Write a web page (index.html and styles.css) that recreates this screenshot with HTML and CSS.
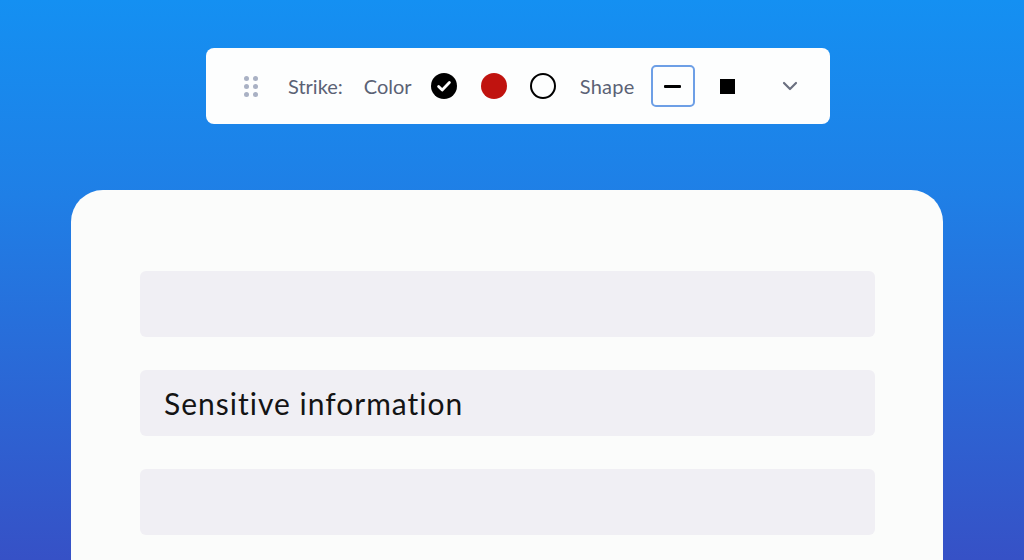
FILE: index.html
```html
<!DOCTYPE html>
<html lang="en">
<head>
<meta charset="utf-8">
<title>Strike toolbar</title>
<link rel="stylesheet" href="styles.css">
</head>
<body>
<div class="toolbar">
  <div class="grip">
    <span></span><span></span><span></span><span></span><span></span><span></span>
  </div>
  <span class="label strike">Strike:</span>
  <span class="label color">Color</span>
  <span class="swatch black">
    <svg width="26" height="26" viewBox="0 0 26 26"><circle cx="13" cy="13" r="13" fill="#000"/><path d="M7.6 13.4l3.6 3.5 7.2-7.4" fill="none" stroke="#fff" stroke-width="2.8" stroke-linecap="round" stroke-linejoin="round"/></svg>
  </span>
  <span class="swatch red"></span>
  <span class="swatch empty"></span>
  <span class="label shape">Shape</span>
  <span class="shape-btn selected"><span class="dash"></span></span>
  <span class="shape-square"></span>
  <span class="chevron">
    <svg width="16" height="10" viewBox="0 0 16 10"><path d="M2 2l6 6 6-6" fill="none" stroke="#6b7080" stroke-width="2.2" stroke-linecap="round" stroke-linejoin="round"/></svg>
  </span>
</div>
<div class="card">
  <div class="field"></div>
  <div class="field"><span class="field-text">Sensitive information</span></div>
  <div class="field"></div>
</div>
</body>
</html>
```

FILE: styles.css
```css
html, body {
  margin: 0;
  padding: 0;
}
body {
  width: 1024px;
  height: 560px;
  overflow: hidden;
  background: linear-gradient(180deg, #1490f2 0%, #1f7fe6 35%, #3651c6 100%);
  font-family: Lato, "Open Sans", "Liberation Sans", sans-serif;
  padding-top: 48px;
  box-sizing: border-box;
}
.toolbar {
  margin-left: 206px;
  width: 624px;
  height: 76px;
  box-sizing: border-box;
  background: #fdfefe;
  border-radius: 8px;
  display: flex;
  align-items: center;
  padding-left: 38px;
}
.grip {
  display: grid;
  grid-template-columns: 5px 5px;
  grid-template-rows: 5px 5px 5px;
  column-gap: 4px;
  row-gap: 3px;
  margin-right: 30px;
}
.grip span {
  width: 5px;
  height: 5px;
  border-radius: 50%;
  background: #a9b1c4;
}
.label {
  font-size: 20px;
  color: #5b6275;
  line-height: 1;
}
.strike { margin-right: 21px; }
.color { margin-right: 19px; }
.swatch {
  width: 26px;
  height: 26px;
  border-radius: 50%;
  box-sizing: border-box;
  flex: none;
  display: block;
}
.swatch svg { display: block; }
.black { margin-right: 24px; }
.red { background: #c0130f; margin-right: 23px; }
.empty { border: 2.5px solid #000; margin-right: 24px; }
.shape { margin-right: 16px; letter-spacing: 0.3px; }
.shape-btn {
  width: 44px;
  height: 42px;
  box-sizing: border-box;
  border: 2px solid #6d9fe6;
  border-radius: 5px;
  display: flex;
  align-items: center;
  justify-content: center;
  margin-right: 25px;
}
.dash {
  width: 17px;
  height: 3px;
  background: #000;
  border-radius: 1px;
}
.shape-square {
  width: 15px;
  height: 15px;
  background: #000;
  margin-right: 47px;
}
.chevron svg { display: block; }
.card {
  margin: 66px 0 0 71px;
  width: 872px;
  height: 370px;
  background: #fbfcfb;
  border-radius: 32px 32px 0 0;
  box-sizing: border-box;
  padding: 81px 68px 0 69px;
  display: flex;
  flex-direction: column;
  gap: 33px;
}
.field {
  height: 66px;
  background: #f0eff4;
  border-radius: 6px;
  display: flex;
  align-items: center;
  padding-left: 24px;
  flex: none;
}
.field-text {
  font-size: 30px;
  letter-spacing: 1px;
  color: #141414;
}
```
